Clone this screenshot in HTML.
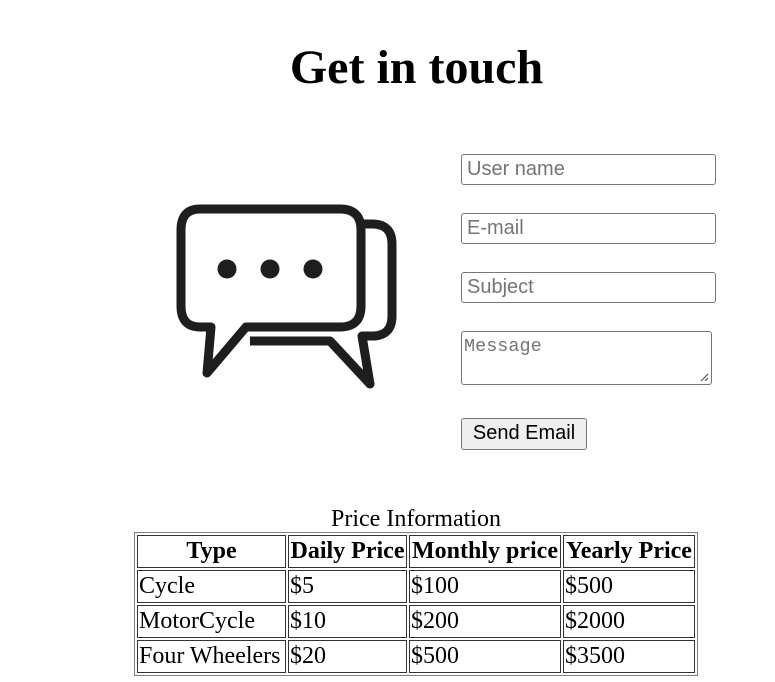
<!DOCTYPE html>
<html><head><meta charset="utf-8"><style>
body{margin:0;width:775px;height:682px;background:#fff;position:relative;font-family:"Liberation Serif",serif;overflow:hidden}
h1{position:absolute;left:0;width:833px;top:40px;margin:0;text-align:center;font-size:48px;line-height:55px;font-weight:bold}
.in{position:absolute;left:461px;width:255px;height:31px;box-sizing:border-box;border:1px solid #767676;border-radius:3px;font-family:"Liberation Sans",sans-serif;font-size:20px;color:#757575;padding:0 5px;line-height:29px}
.ta{position:absolute;left:461px;top:331px;width:251px;height:54px;box-sizing:border-box;border:1px solid #767676;border-radius:3px;font-family:"Liberation Mono",monospace;font-size:18.5px;color:#757575;padding:4px 2px}
.btn{position:absolute;left:461px;top:418px;width:126px;height:32px;box-sizing:border-box;border:1px solid #767676;border-radius:3px;background:#efefef;font-family:"Liberation Sans",sans-serif;font-size:20px;text-align:center;line-height:29px}
.cap{position:absolute;left:134px;width:564px;top:505px;text-align:center;font-size:24px;line-height:28px}
table{position:absolute;left:134px;top:532px;border:1px solid #808080;border-spacing:2px;border-collapse:separate;font-size:24px;table-layout:fixed}
td,th{border:1px solid #333;padding:0 1px;height:31px;line-height:29px;text-align:left;white-space:nowrap;overflow:visible}
th{text-align:center}
</style></head><body>
<h1>Get in touch</h1>
<svg style="position:absolute;left:0;top:0" width="775" height="682">
<g fill="none" stroke="#1e1e1e" stroke-width="9" stroke-linejoin="round">
<path d="M360 224 H372 Q392 224 392 244 V316 Q392 336 372 336 H362 L370 384 L330 341 H250"/>
<path d="M200 209 H340 Q361 209 361 230 V306 Q361 327 340 327 H246 L207 373 L211 327 H200 Q181 327 181 306 V230 Q181 209 200 209 Z" fill="#fff"/>
</g>
<g fill="#1e1e1e"><circle cx="227" cy="269" r="9.5"/><circle cx="270" cy="269" r="9.5"/><circle cx="313" cy="269" r="9.5"/></g>
</svg>
<div class="in" style="top:154px">User name</div>
<div class="in" style="top:213px">E-mail</div>
<div class="in" style="top:272px">Subject</div>
<div class="ta">Message<svg style="position:absolute;right:2px;bottom:2px" width="10" height="10"><path d="M9 2L2 9M9 6L6 9" stroke="#555" stroke-width="1.2"/></svg></div>
<div class="btn">Send Email</div>
<div class="cap">Price Information</div>
<table style="width:564px">
<colgroup><col style="width:149px"><col style="width:119px"><col style="width:152px"><col style="width:132px"></colgroup>
<tr><th>Type</th><th>Daily Price</th><th>Monthly price</th><th>Yearly Price</th></tr>
<tr><td>Cycle</td><td>$5</td><td>$100</td><td>$500</td></tr>
<tr><td>MotorCycle</td><td>$10</td><td>$200</td><td>$2000</td></tr>
<tr><td>Four Wheelers</td><td>$20</td><td>$500</td><td>$3500</td></tr>
</table>
</body></html>
